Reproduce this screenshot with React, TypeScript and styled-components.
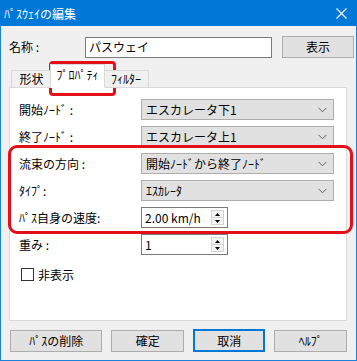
import React from 'react'
import styled, { createGlobalStyle } from 'styled-components'

const GlobalStyle = createGlobalStyle`
  html, body {
    margin: 0;
    padding: 0;
    background: #ffffff;
  }
  body {
    font-family: "Noto Sans CJK JP", "Noto Sans", sans-serif;
    font-size: 12px;
    color: #000;
  }
`

const Window = styled.div`
  position: relative;
  width: 357px;
  height: 361px;
  box-sizing: border-box;
  border: 1px solid #1a82d8;
  border-top: none;
  background: #f0f0f0;
  display: flex;
  flex-direction: column;
`

const TitleBar = styled.div`
  height: 26px;
  background: #0078d7;
  color: #fff;
  display: flex;
  align-items: center;
  justify-content: space-between;
  padding: 0 10px 0 4px;
  font-size: 12px;
  margin: 0 -1px;
`

const Body = styled.div`
  flex: 1;
  display: flex;
  flex-direction: column;
  padding: 10px 9px 0 7px;
`

const NameRow = styled.div`
  display: grid;
  grid-template-columns: 66px 187px 72px;
  column-gap: 10px;
  align-items: center;
  height: 21px;
  padding-left: 1px;
`

const Label = styled.span`
  white-space: nowrap;
  line-height: 1;
`

const TextInput = styled.div`
  box-sizing: border-box;
  height: 21px;
  border: 1px solid #7a7a7a;
  background: #fff;
  display: flex;
  align-items: center;
  padding-left: 3px;
  line-height: 1;
`

const Button = styled.div<{ $focused?: boolean; $width?: number }>`
  box-sizing: border-box;
  height: ${(p) => (p.$focused ? 23 : 22)}px;
  width: ${(p) => (p.$width ? `${p.$width}px` : 'auto')};
  background: #e1e1e1;
  border: ${(p) => (p.$focused ? '2px solid #0078d7' : '1px solid #adadad')};
  display: flex;
  align-items: center;
  justify-content: center;
  line-height: 1;
`

const Tabs = styled.div`
  margin-top: 7px;
  margin-left: 1px;
  display: flex;
  flex-direction: column;
`

const TabStrip = styled.div`
  display: flex;
  align-items: flex-end;
  padding-left: 2px;
  height: 24px;
  position: relative;
  z-index: 1;
  margin-bottom: -1px;
`

const Tab = styled.div<{ $active?: boolean; $width: number }>`
  box-sizing: border-box;
  width: ${(p) => p.$width}px;
  height: ${(p) => (p.$active ? 24 : 18)}px;
  margin: 0 ${(p) => (p.$active ? -2 : 0)}px;
  background: ${(p) => (p.$active ? '#fff' : '#f0f0f0')};
  border: 1px solid #d9d9d9;
  border-bottom: ${(p) => (p.$active ? '1px solid #fff' : '1px solid #d9d9d9')};
  display: flex;
  align-items: center;
  justify-content: center;
  line-height: 1;
  z-index: ${(p) => (p.$active ? 2 : 1)};
  padding-bottom: ${(p) => (p.$active ? 3 : 0)}px;
`

const Panel = styled.div`
  box-sizing: border-box;
  height: 234px;
  background: #fff;
  border: 1px solid #d9d9d9;
  padding: 11px 12px 0 9px;
  display: flex;
  flex-direction: column;
  gap: 6px;
`

const FieldRow = styled.div`
  display: grid;
  grid-template-columns: 122px 193px;
  align-items: center;
  height: 21px;
`

const Select = styled.div`
  box-sizing: border-box;
  height: 21px;
  background: #e1e1e1;
  border: 1px solid #adadad;
  display: flex;
  align-items: center;
  justify-content: space-between;
  padding: 0 6px 0 4px;
  line-height: 1;
`

const SpinBox = styled(TextInput)`
  justify-content: space-between;
  padding-right: 3px;
  width: 87px;
`

const SpinButtons = styled.div`
  width: 13px;
  height: 15px;
  display: flex;
  flex-direction: column;
  border: 1px solid #d4d4d4;
  box-sizing: border-box;
`

const SpinHalf = styled.div`
  flex: 1;
  background: #f4f4f4;
  display: flex;
  align-items: center;
  justify-content: center;
  & + & {
    border-top: 1px solid #d4d4d4;
  }
`

const CheckRow = styled.div`
  display: flex;
  align-items: center;
  gap: 4px;
  margin-top: 7px;
  margin-left: 2px;
  line-height: 1;
`

const CheckBox = styled.div`
  box-sizing: border-box;
  width: 13px;
  height: 13px;
  border: 1px solid #333;
  background: #fff;
`

const ButtonRow = styled.div`
  display: flex;
  align-items: center;
  gap: 9px;
  margin-top: 8px;
  padding-left: 2px;
`

const Annotation = styled.div<{ $radius: number }>`
  position: absolute;
  border: 3px solid #e3101c;
  border-radius: ${(p) => p.$radius}px;
  pointer-events: none;
`

const Chevron = () => (
  <svg width="9" height="6" viewBox="0 0 9 6">
    <path d="M0.5 0.8 L4.5 4.8 L8.5 0.8" fill="none" stroke="#606060" strokeWidth="1" />
  </svg>
)

const Arrow = ({ up }: { up?: boolean }) => (
  <svg width="5" height="3" viewBox="0 0 5 3">
    <path d={up ? 'M0 3 L2.5 0 L5 3 Z' : 'M0 0 L2.5 3 L5 0 Z'} fill="#000" />
  </svg>
)

const CloseIcon = () => (
  <svg width="11" height="11" viewBox="0 0 11 11">
    <path d="M0.5 0.5 L10.5 10.5 M10.5 0.5 L0.5 10.5" stroke="#fff" strokeWidth="1.1" />
  </svg>
)

const selectRows = [
  { label: '開始ﾉｰﾄﾞ :', value: 'エスカレータ下1' },
  { label: '終了ﾉｰﾄﾞ :', value: 'エスカレータ上1' },
  { label: '流束の方向 :', value: '開始ﾉｰﾄﾞから終了ﾉｰﾄﾞ' },
  { label: 'ﾀｲﾌﾟ:', value: 'ｴｽｶﾚｰﾀ' },
]

function Spin({ value }: { value: string }) {
  return (
    <SpinBox>
      <span>{value}</span>
      <SpinButtons>
        <SpinHalf><Arrow up /></SpinHalf>
        <SpinHalf><Arrow /></SpinHalf>
      </SpinButtons>
    </SpinBox>
  )
}

export default function App() {
  return (
    <>
      <GlobalStyle />
      <Window>
        <TitleBar>
          <span>ﾊﾟｽｳｪｲの編集</span>
          <CloseIcon />
        </TitleBar>
        <Body>
          <NameRow>
            <Label>名称 :</Label>
            <TextInput>パスウェイ</TextInput>
            <Button>表示</Button>
          </NameRow>
          <Tabs>
            <TabStrip>
              <Tab $width={41}>形状</Tab>
              <Tab $width={55} $active>ﾌﾟﾛﾊﾟﾃｨ</Tab>
              <Tab $width={46}>ﾌｨﾙﾀｰ</Tab>
            </TabStrip>
            <Panel>
              {selectRows.map((r) => (
                <FieldRow key={r.label}>
                  <Label>{r.label}</Label>
                  <Select>
                    <span>{r.value}</span>
                    <Chevron />
                  </Select>
                </FieldRow>
              ))}
              <FieldRow>
                <Label>ﾊﾟｽ自身の速度:</Label>
                <Spin value="2.00 km/h" />
              </FieldRow>
              <FieldRow>
                <Label>重み :</Label>
                <Spin value="1" />
              </FieldRow>
              <CheckRow>
                <CheckBox />
                <span>非表示</span>
              </CheckRow>
            </Panel>
          </Tabs>
          <ButtonRow>
            <Button $width={93}>ﾊﾟｽの削除</Button>
            <Button $width={73}>確定</Button>
            <Button $width={73} $focused>取消</Button>
            <Button $width={73}>ﾍﾙﾌﾟ</Button>
          </ButtonRow>
        </Body>
        <Annotation $radius={4} style={{ left: 48, top: 61, width: 61, height: 29 }} />
        <Annotation $radius={9} style={{ left: 7, top: 145, width: 339, height: 83 }} />
      </Window>
    </>
  )
}
